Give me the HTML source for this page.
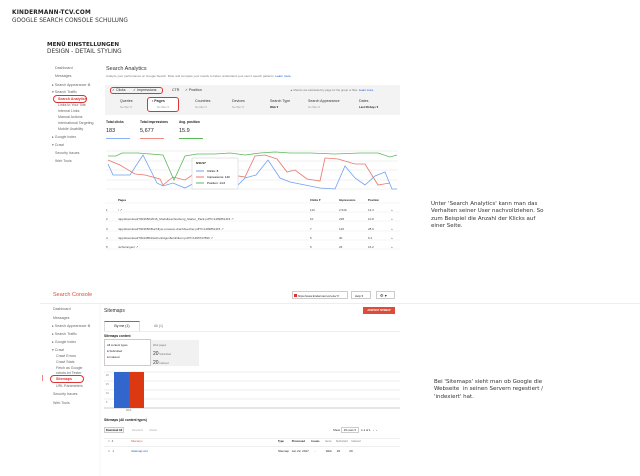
<!DOCTYPE html>
<html><head><meta charset="utf-8"><style>
*{margin:0;padding:0;box-sizing:border-box}
body{width:640px;height:476px;background:#fff;position:relative;overflow:hidden;font-family:"Liberation Sans",sans-serif;color:#222}
.a{position:absolute;white-space:nowrap}
.s{font-size:3.6px;color:#666}
.t{font-size:3.6px;color:#333}
.h{font-family:"DejaVu Sans",sans-serif}
</style></head><body>
<div class="a h" style="left:12px;top:10px;font-size:5.8px;font-weight:bold;letter-spacing:0.2px">KINDERMANN-TCV.COM</div>
<div class="a h" style="left:12px;top:18px;font-size:5.8px;letter-spacing:0.05px;color:#333">GOOGLE SEARCH CONSOLE SCHULUNG</div>
<div class="a h" style="left:47px;top:41.5px;font-size:5.6px;font-weight:bold">MENÜ EINSTELLUNGEN</div>
<div class="a h" style="left:47px;top:49px;font-size:5.8px;color:#333">DESIGN - DETAIL STYLING</div>

<!-- upper sidebar -->
<div class="a s" style="left:55px;top:66px">Dashboard</div>
<div class="a s" style="left:55px;top:74px">Messages</div>
<div class="a s" style="left:52px;top:83px">▸ Search Appearance ⚙</div>
<div class="a s" style="left:52px;top:90px">▾ Search Traffic</div>
<div class="a" style="left:53px;top:95px;width:34px;height:8px;border:1px solid #d33;border-radius:4px"></div>
<div class="a" style="left:58px;top:97px;font-size:3.6px;color:#d33;font-weight:bold">Search Analytics</div>
<div class="a s" style="left:58px;top:103px">Links to Your Site</div>
<div class="a s" style="left:58px;top:109px">Internal Links</div>
<div class="a s" style="left:58px;top:115px">Manual Actions</div>
<div class="a s" style="left:58px;top:121px">International Targeting</div>
<div class="a s" style="left:58px;top:127px">Mobile Usability</div>
<div class="a s" style="left:52px;top:135px">▸ Google Index</div>
<div class="a s" style="left:52px;top:143px">▾ Crawl</div>
<div class="a s" style="left:55px;top:151px">Security Issues</div>
<div class="a s" style="left:55px;top:159px">Web Tools</div>

<!-- upper main -->
<div class="a" style="left:106px;top:66px;font-size:5.5px;color:#333">Search Analytics</div>
<div class="a" style="left:106px;top:74px;font-size:3px;color:#777">Analyze your performance on Google Search. Filter and compare your results to better understand your user's search patterns. <span style="color:#15c">Learn more.</span></div>
<div class="a" style="left:105px;top:85px;width:295px;height:30px;background:#f3f3f3"></div>
<div class="a" style="left:110px;top:86.5px;width:53px;height:7px;border:1px solid #d33;border-radius:3px"></div>
<div class="a t" style="left:112px;top:88px">✓ Clicks</div>
<div class="a t" style="left:133px;top:88px">✓ Impressions</div>
<div class="a t" style="left:172px;top:88px">CTR</div>
<div class="a t" style="left:185px;top:88px">✓ Position</div>
<div class="a" style="left:290px;top:88px;font-size:2.8px;color:#777">▲ Metrics are calculated by page for the group or filter. <span style="color:#15c">Learn more.</span></div>
<div class="a" style="left:147px;top:97px;width:32px;height:15px;border:1px solid #d33;border-radius:3px;background:#fff"></div>
<div class="a t" style="left:120px;top:99px">Queries</div><div class="a" style="left:120px;top:105px;font-size:2.8px;color:#999">No filter ▾</div>
<div class="a t" style="left:152px;top:99px;font-weight:bold">▪ Pages</div><div class="a" style="left:157px;top:105px;font-size:2.8px;color:#999">No filter ▾</div>
<div class="a t" style="left:195px;top:99px">Countries</div><div class="a" style="left:195px;top:105px;font-size:2.8px;color:#999">No filter ▾</div>
<div class="a t" style="left:232px;top:99px">Devices</div><div class="a" style="left:232px;top:105px;font-size:2.8px;color:#999">No filter ▾</div>
<div class="a t" style="left:270px;top:99px">Search Type</div><div class="a" style="left:270px;top:105px;font-size:2.8px;font-weight:bold">Web ▾</div>
<div class="a t" style="left:308px;top:99px">Search Appearance</div><div class="a" style="left:308px;top:105px;font-size:2.8px;color:#999">No filter ▾</div>
<div class="a t" style="left:359px;top:99px">Dates</div><div class="a" style="left:359px;top:105px;font-size:2.8px;font-weight:bold">Last 28 days ▾</div>

<div class="a" style="left:106px;top:120px;font-size:3.3px;font-weight:bold">Total clicks</div>
<div class="a" style="left:106px;top:128px;font-size:5.5px">183</div>
<div class="a" style="left:106px;top:138px;width:24px;height:1px;background:#8ab4f8"></div>
<div class="a" style="left:140px;top:120px;font-size:3.3px;font-weight:bold">Total impressions</div>
<div class="a" style="left:140px;top:128px;font-size:5.5px">5,677</div>
<div class="a" style="left:140px;top:138px;width:24px;height:1px;background:#f28b82"></div>
<div class="a" style="left:179px;top:120px;font-size:3.3px;font-weight:bold">Avg. position</div>
<div class="a" style="left:179px;top:128px;font-size:5.5px">15.9</div>
<div class="a" style="left:179px;top:138px;width:24px;height:1px;background:#5cb85c"></div>

<svg class="a" style="left:0;top:0" width="640" height="476">
<g stroke="#e3e3e3" stroke-width="0.5"><line x1="106" y1="151" x2="398" y2="151"/><line x1="106" y1="161" x2="398" y2="161"/><line x1="106" y1="170" x2="398" y2="170"/><line x1="106" y1="180" x2="398" y2="180"/><line x1="106" y1="189" x2="398" y2="189"/></g>
<g fill="none" stroke-width="0.8">
<polyline stroke="#6ea0f0" points="108,164 113,175 122,175 130,175 143,155 157,183 163,186 173,183 185,188 200,180 238,185 245,178 256,175 268,160 280,178 290,182 320,188 335,189 345,166 355,178 365,185 375,176 385,172 392,189 397,189"/>
<polyline stroke="#e8756b" points="108,160 120,165 135,174 145,175 160,179 163,185 173,177 185,180 200,170 245,177 255,156 265,155 277,159 287,172 295,170 307,179 320,181 325,158 338,159 355,164 365,164 378,185 390,183"/>
<polyline stroke="#5cb85c" points="108,156 116,156 122,153 138,153 163,155 174,180 185,156 197,154 215,154 230,153 245,155 260,153 275,152 290,153 310,153 335,154 360,153 378,153 390,157 397,155"/>
</g>
<rect x="192" y="158" width="46" height="31" fill="#fff" stroke="#ccc" stroke-width="0.5"/>
<text x="196" y="164" font-size="3" font-weight="bold" font-family="Liberation Sans">6/11/17</text>
<line x1="196" y1="171" x2="204" y2="171" stroke="#6ea0f0"/><text x="207" y="172" font-size="3" font-family="Liberation Sans">Clicks: 8</text>
<line x1="196" y1="177" x2="204" y2="177" stroke="#e8756b"/><text x="207" y="178" font-size="3" font-family="Liberation Sans">Impressions: 140</text>
<line x1="196" y1="183" x2="204" y2="183" stroke="#5cb85c"/><text x="207" y="184" font-size="3" font-family="Liberation Sans">Position: 14.6</text>
<g stroke="#ececec" stroke-width="0.5"><line x1="105" y1="203" x2="400" y2="203"/><line x1="105" y1="212" x2="400" y2="212"/><line x1="105" y1="221" x2="400" y2="221"/><line x1="105" y1="231" x2="400" y2="231"/><line x1="105" y1="240" x2="400" y2="240"/><line x1="105" y1="249" x2="400" y2="249"/></g>
<g stroke="#ddd" stroke-width="0.5"><line x1="104" y1="372" x2="400" y2="372"/><line x1="104" y1="381" x2="400" y2="381"/><line x1="104" y1="390" x2="400" y2="390"/><line x1="104" y1="399" x2="400" y2="399"/></g>
<line x1="104" y1="408" x2="400" y2="408" stroke="#999" stroke-width="0.6"/>
<rect x="114" y="372" width="15" height="36" fill="#3366cc"/>
<rect x="129" y="372" width="15" height="36" fill="#dc3912"/>
<line x1="100" y1="303" x2="100" y2="476" stroke="#eee" stroke-width="0.5"/>
</svg>
<div class="a" style="left:118px;top:198px;font-size:2.8px;font-weight:bold">Pages</div>
<div class="a" style="left:310px;top:198px;font-size:2.8px;font-weight:bold">Clicks ▾</div>
<div class="a" style="left:339px;top:198px;font-size:2.8px;font-weight:bold">Impressions</div>
<div class="a" style="left:368px;top:198px;font-size:2.8px;font-weight:bold">Position</div>
<div class="a" style="left:106px;top:206px;font-size:3px;line-height:9.3px;color:#444">1<br>2<br>3<br>4<br>5</div>
<div class="a" style="left:118px;top:206px;font-size:3px;line-height:9.3px;color:#444">/ ↗<br>/app/download/7003650/2016_Modulbeschreibung_Starter_Pack.pdf?t=1499851415 ↗<br>/app/download/7003650/Buchflyer+unserer+Fachbuecher.pdf?t=1499851415 ↗<br>/app/download/7004485/Zeichenfolgen8einFiltern.pdf?t=1495727890 ↗<br>/schulungen/ ↗</div>
<div class="a" style="left:310px;top:206px;font-size:3px;line-height:9.3px;color:#444">110<br>10<br>7<br>5<br>5</div>
<div class="a" style="left:339px;top:206px;font-size:3px;line-height:9.3px;color:#444">2,549<br>238<br>126<br>30<br>26</div>
<div class="a" style="left:368px;top:206px;font-size:3px;line-height:9.3px;color:#444">13.3<br>10.8<br>28.6<br>6.4<br>16.2</div>
<div class="a" style="left:391px;top:206px;font-size:3px;line-height:9.3px;color:#444">»<br>»<br>»<br>»<br>»</div>

<!-- right texts -->
<div class="a h" style="left:431px;top:201px;font-size:5.5px;line-height:7.3px;color:#333">Unter 'Search Analytics' kann man das<br>Verhalten seiner User nachvollziehen. So<br>zum Beispiel die Anzahl der Klicks auf<br>einer Seite.</div>
<div class="a h" style="left:434px;top:379px;font-size:5.5px;line-height:7.3px;color:#333">Bei 'Sitemaps' sieht man ob Google die<br>Webseite &nbsp;in seinen Servern regestiert /<br>'indexiert' hat.</div>

<!-- lower -->
<div class="a" style="left:53px;top:292px;font-size:5.5px;color:#dd4b39">Search Console</div>
<div class="a" style="left:292px;top:291px;width:56px;height:8px;border:0.5px solid #ccc;font-size:2.8px;padding:2px 1px"><span style="display:inline-block;width:3px;height:3px;background:#d33"></span> https://www.kindermann-tcv.de/ ▾</div>
<div class="a" style="left:351px;top:291px;width:20px;height:8px;border:0.5px solid #ccc;font-size:2.8px;padding:2px 3px">Help ▾</div>
<div class="a" style="left:376px;top:291px;width:19px;height:8px;border:0.5px solid #ccc;font-size:4px;padding:1px 3px">⚙ ▾</div>
<div class="a" style="left:40px;top:303px;width:600px;height:0.5px;background:#eee"></div>
<div class="a s" style="left:53px;top:307px">Dashboard</div>
<div class="a s" style="left:53px;top:316px">Messages</div>
<div class="a s" style="left:52px;top:324px">▸ Search Appearance ⚙</div>
<div class="a s" style="left:52px;top:332px">▸ Search Traffic</div>
<div class="a s" style="left:52px;top:340px">▸ Google Index</div>
<div class="a s" style="left:52px;top:348px">▾ Crawl</div>
<div class="a s" style="left:56px;top:354px">Crawl Errors</div>
<div class="a s" style="left:56px;top:360px">Crawl Stats</div>
<div class="a s" style="left:56px;top:366px">Fetch as Google</div>
<div class="a s" style="left:56px;top:371px">robots.txt Tester</div>
<div class="a" style="left:50px;top:375px;width:34px;height:8px;border:1px solid #d33;border-radius:4px"></div>
<div class="a" style="left:56px;top:377px;font-size:3.6px;color:#d33;font-weight:bold">Sitemaps</div>
<div class="a" style="left:42px;top:375px;width:0.6px;height:6px;background:#e88"></div>
<div class="a s" style="left:56px;top:384px">URL Parameters</div>
<div class="a s" style="left:53px;top:392px">Security Issues</div>
<div class="a s" style="left:53px;top:401px">Web Tools</div>

<div class="a" style="left:104px;top:308px;font-size:5px;color:#333">Sitemaps</div>
<div class="a" style="left:363px;top:307px;width:32px;height:7px;background:#dd4b39;color:#fff;font-size:2.4px;font-weight:bold;text-align:center;line-height:7px">ADD/TEST SITEMAP</div>
<div class="a" style="left:104px;top:331px;width:296px;height:0.5px;background:#eee"></div>
<div class="a" style="left:104px;top:321px;width:36px;height:10px;border-top:1px solid #dd4b39;border-left:0.5px solid #ddd;border-right:0.5px solid #ddd;background:#fff;font-size:3.5px;text-align:center;line-height:9px">By me (1)</div>
<div class="a" style="left:154px;top:324px;font-size:3.5px;color:#777">All (1)</div>
<div class="a" style="left:104px;top:334px;font-size:3.2px;font-weight:bold">Sitemaps content</div>
<div class="a" style="left:104px;top:339px;width:47px;height:27px;border:0.5px solid #ccc;font-size:2.8px;padding:2px;line-height:6px">All content types<br><span style="color:#3366cc">■</span> Submitted<br><span style="color:#dc3912">■</span> Indexed</div>
<div class="a" style="left:151px;top:340px;width:48px;height:26px;background:#f1f1f1;font-size:2.6px;color:#777;padding:2px;line-height:8px">Web pages<br><span style="font-size:5px;color:#333">20</span> Submitted<br><span style="font-size:5px;color:#333">20</span> Indexed</div>
<div class="a" style="left:106px;top:371px;font-size:2.4px;color:#777;line-height:9px">20<br>15<br>10<br>5</div>
<div class="a" style="left:126px;top:409px;font-size:2.6px;color:#777">Web</div>
<div class="a" style="left:104px;top:418px;font-size:3.2px;font-weight:bold">Sitemaps (All content types)</div>
<div class="a" style="left:104px;top:427px;width:20px;height:6px;border:0.5px solid #ccc;background:#f6f6f6;font-size:2.6px;font-weight:bold;text-align:center;line-height:6px">Download All</div>
<div class="a" style="left:132px;top:429px;font-size:2.6px;color:#aaa">Resubmit &nbsp;&nbsp;&nbsp;&nbsp;&nbsp;&nbsp;&nbsp; Delete</div>
<div class="a" style="left:333px;top:428px;font-size:2.8px">Show <span style="border:0.5px solid #ccc;padding:0 2px">25 rows ▾</span> &nbsp; 1-1 of 1 &nbsp; ‹ &nbsp; ›</div>
<div class="a" style="left:104px;top:438px;width:296px;height:0.5px;background:#eee"></div>
<div class="a" style="left:108px;top:440px;font-size:2.6px;color:#555">□ &nbsp;&nbsp;#</div>
<div class="a" style="left:131px;top:440px;font-size:2.6px;color:#dd4b39">Sitemap ▾</div>
<div class="a" style="left:278px;top:440px;font-size:2.6px;font-weight:bold">Type &nbsp;&nbsp;&nbsp;&nbsp;&nbsp;&nbsp;&nbsp;&nbsp;&nbsp; Processed &nbsp;&nbsp;&nbsp;&nbsp;&nbsp;&nbsp;&nbsp; Issues &nbsp;&nbsp;&nbsp;&nbsp;&nbsp;&nbsp; <span style="font-weight:normal;color:#777">Items &nbsp;&nbsp;&nbsp;&nbsp; Submitted &nbsp;&nbsp;&nbsp; Indexed</span></div>
<div class="a" style="left:104px;top:446px;width:296px;height:0.5px;background:#eee"></div>
<div class="a" style="left:108px;top:449px;font-size:3px;color:#555">□ &nbsp;&nbsp;1</div>
<div class="a" style="left:131px;top:449px;font-size:3px;color:#15c">/sitemap.xml</div>
<div class="a" style="left:278px;top:449px;font-size:3px">Sitemap &nbsp;&nbsp;Jun 22, 2017 &nbsp;&nbsp;&nbsp;&nbsp;&nbsp; - &nbsp;&nbsp;&nbsp;&nbsp;&nbsp;&nbsp;&nbsp;&nbsp;&nbsp;&nbsp; Web &nbsp;&nbsp;&nbsp;&nbsp; 20 &nbsp;&nbsp;&nbsp;&nbsp;&nbsp;&nbsp;&nbsp;&nbsp;&nbsp; 20</div>
</body></html>
